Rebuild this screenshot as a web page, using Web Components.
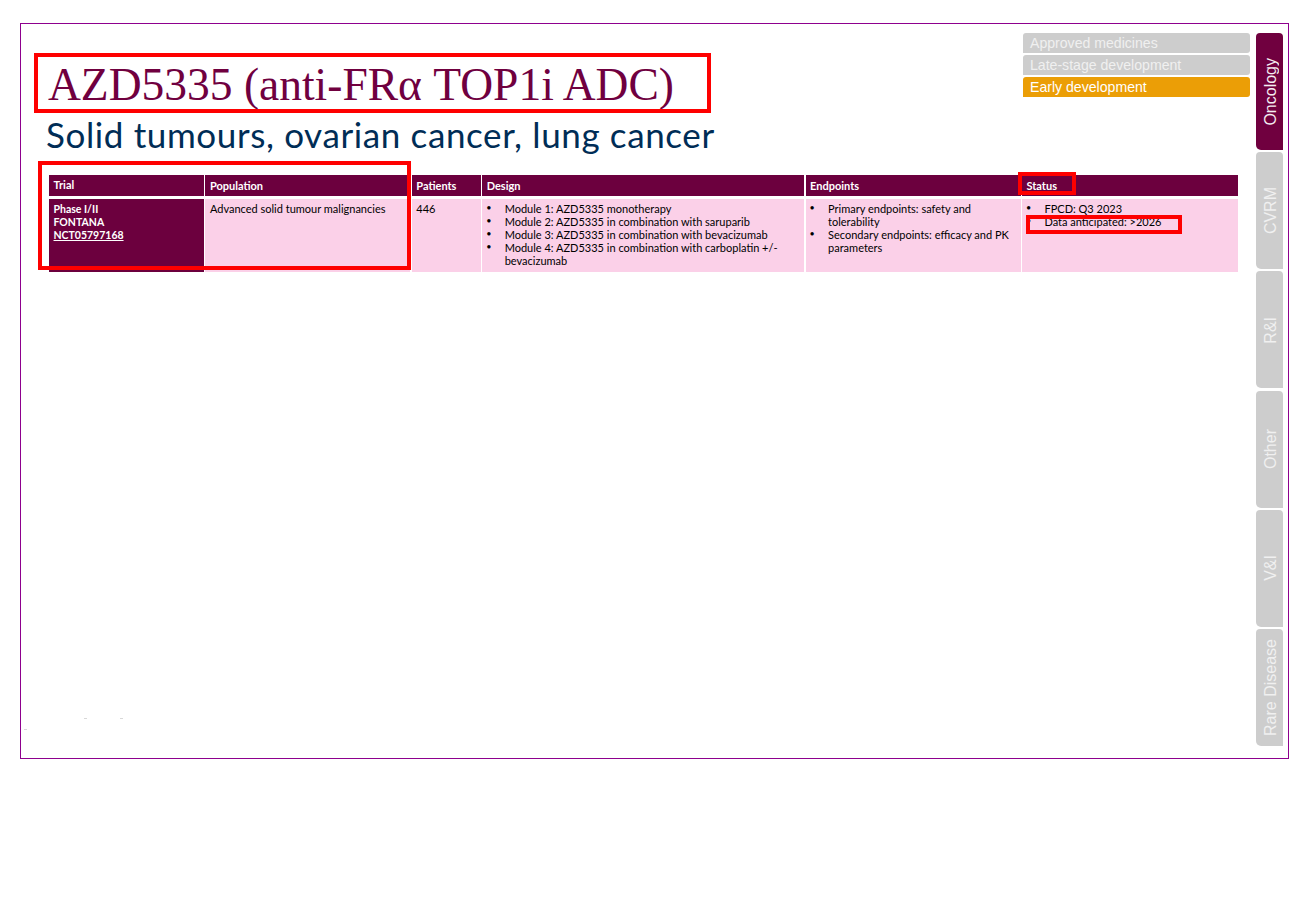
<!DOCTYPE html>
<html lang="en"><head><meta charset="utf-8"><title>AZD5335</title>
<style>html,body{margin:0;background:#fff}body{font-family:"Lato","Liberation Sans",sans-serif}</style></head>
<body>
<x-slide>
  <x-header slot="main" heading="AZD5335 (anti-FRα TOP1i ADC)" sub="Solid tumours, ovarian cancer, lung cancer">
    <x-legend active="false">Approved medicines</x-legend>
    <x-legend active="false">Late-stage development</x-legend>
    <x-legend active="true">Early development</x-legend>
  </x-header>
  <x-trial-table slot="main"></x-trial-table>
  <x-tab slot="tabs" active="true">Oncology</x-tab>
  <x-tab slot="tabs">CVRM</x-tab>
  <x-tab slot="tabs">R&amp;I</x-tab>
  <x-tab slot="tabs">Other</x-tab>
  <x-tab slot="tabs">V&amp;I</x-tab>
  <x-tab slot="tabs">Rare Disease</x-tab>
  <x-mark slot="over" style="left:13px;top:29px;width:669px;height:52px"></x-mark>
  <x-mark slot="over" style="left:17px;top:137px;width:365px;height:101px"></x-mark>
  <x-mark slot="over" style="left:997px;top:148px;width:50px;height:15px"></x-mark>
  <x-mark slot="over" style="left:1005px;top:191px;width:148px;height:11px"></x-mark>
  <x-speck slot="over" style="left:63px;top:694px"></x-speck>
  <x-speck slot="over" style="left:99px;top:694px"></x-speck>
  <x-speck slot="over" style="left:3px;top:705px"></x-speck>
</x-slide>
<script>
function def(name, html, init){
  customElements.define(name, class extends HTMLElement{
    constructor(){super();this.attachShadow({mode:'open'}).innerHTML=html;}
    connectedCallback(){ if(init) init(this); }
  });
}
def('x-slide',`<style>
:host{display:block;box-sizing:border-box;width:1269px;height:736px;margin:23px 0 0 20px;border:1px solid #8e008e;position:relative}
.g{display:grid;grid-template-columns:1fr 27px;column-gap:6px;height:100%;box-sizing:border-box;padding:9px 5px 12px 28px}
.m{display:flex;flex-direction:column;min-width:0}
.t{display:flex;flex-direction:column;justify-content:space-between}
</style><div class="g"><div class="m"><slot name="main"></slot></div><div class="t"><slot name="tabs"></slot></div></div><slot name="over"></slot>`);
def('x-header',`<style>
:host{display:flex;justify-content:space-between;height:142px;color:#000}
.l{padding-top:26px}
h1{margin:0 0 0 -1px;font:400 45.5px/52px "Liberation Serif",serif;color:#70003f;white-space:nowrap}
h2{margin:2px 0 0 -3px;font:400 35px/42px "Lato",sans-serif;letter-spacing:.62px;color:#002d56;white-space:nowrap}
.r{display:flex;flex-direction:column;gap:2px;width:227px}
</style><div class="l"><h1></h1><h2></h2></div><div class="r"><slot></slot></div>`,el=>{
  el.shadowRoot.querySelector('h1').textContent=el.getAttribute('heading');
  el.shadowRoot.querySelector('h2').textContent=el.getAttribute('sub');
});
def('x-legend',`<style>
:host{display:block;box-sizing:border-box;height:20px;padding-left:7px;border-radius:3px 3px 3px 0;background:#cdcdcd;color:#f0f0f0;font:14.1px/20px "Liberation Sans",sans-serif}
:host([active="true"]){background:#eb9e06;color:#fff}
</style><slot></slot>`);
def('x-tab',`<style>
:host{display:flex;align-items:center;justify-content:center;width:27px;height:117px;box-sizing:border-box;padding-left:1px;background:#cdcdcd;color:#f0f0f0;border-radius:4px 4px 0 5px;font:16px/27px "Liberation Sans",sans-serif}
:host([active="true"]){background:#70003f;color:#f5edf2}
span{writing-mode:vertical-rl;transform:rotate(180deg);white-space:nowrap}
</style><span><slot></slot></span>`);
def('x-mark',`<style>:host{display:block;position:absolute;border:4px solid #fe0000;pointer-events:none}</style>`);
def('x-speck',`<style>:host{display:block;position:absolute;width:3px;height:1px;background:#d8d8d8}</style>`);
def('x-bullets',`<style>
:host{display:block}
ul{margin:0;padding:0;list-style:none}
li{position:relative;padding-left:18px}
li::before{content:"•";position:absolute;left:-.5px;top:-1px;font-size:9px}
</style><ul></ul>`,el=>{
  const u=el.shadowRoot.querySelector('ul');
  u.innerHTML='';
  el.getAttribute('items').split('|').forEach(t=>{const li=document.createElement('li');li.textContent=t;u.appendChild(li);});
});
def('x-trial-table',`<style>
:host{display:grid;grid-template-columns:155px 205px 69px 322px 215px 216px;column-gap:1.4px;row-gap:3px;grid-template-rows:21px 73px;margin-right:12px;font:11px/13px "Lato",sans-serif;color:#000}
.h{background:#6c003e;color:#fff;font-weight:700;padding:4px 4.5px 0;box-sizing:border-box}
.c{background:#fbd0e8;padding:3px 4.5px 0;box-sizing:border-box}
.d{background:#6c003e;color:#fff;font-weight:700;font-size:10.5px;padding-top:4px}
a{color:inherit}
</style>
<div class="h" style="padding-top:3px">Trial</div><div class="h">Population</div><div class="h">Patients</div><div class="h">Design</div><div class="h">Endpoints</div><div class="h">Status</div>
<div class="c d">Phase I/II<br>FONTANA<br><a href="#">NCT05797168</a></div>
<div class="c">Advanced solid tumour malignancies</div>
<div class="c">446</div>
<div class="c"><x-bullets items="Module 1: AZD5335 monotherapy|Module 2: AZD5335 in combination with saruparib|Module 3: AZD5335 in combination with bevacizumab|Module 4: AZD5335 in combination with carboplatin +/- bevacizumab"></x-bullets></div>
<div class="c"><x-bullets items="Primary endpoints: safety and tolerability|Secondary endpoints: efficacy and PK parameters"></x-bullets></div>
<div class="c"><x-bullets items="FPCD: Q3 2023|Data anticipated: >2026"></x-bullets></div>`);
</script>
</body></html>
